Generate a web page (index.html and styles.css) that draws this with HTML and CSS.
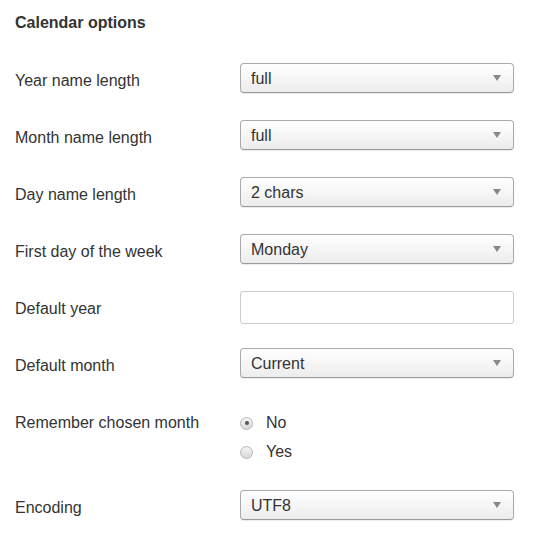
FILE: index.html
```html
<!DOCTYPE html>
<html>
<head>
<meta charset="utf-8">
<link rel="stylesheet" href="styles.css">
</head>
<body>
<div class="form">
  <h3 class="title">Calendar options</h3>
  <div class="row">
    <div class="label">Year name length</div>
    <div class="select"><span class="value">full</span><span class="arrow"></span></div>
  </div>
  <div class="row">
    <div class="label">Month name length</div>
    <div class="select"><span class="value">full</span><span class="arrow"></span></div>
  </div>
  <div class="row">
    <div class="label">Day name length</div>
    <div class="select"><span class="value">2 chars</span><span class="arrow"></span></div>
  </div>
  <div class="row">
    <div class="label">First day of the week</div>
    <div class="select"><span class="value">Monday</span><span class="arrow"></span></div>
  </div>
  <div class="row">
    <div class="label">Default year</div>
    <div class="input"></div>
  </div>
  <div class="row">
    <div class="label">Default month</div>
    <div class="select"><span class="value">Current</span><span class="arrow"></span></div>
  </div>
  <div class="row radio-row">
    <div class="label">Remember chosen month</div>
    <div class="radios">
      <div class="radio-line"><span class="radio checked"></span><span>No</span></div>
      <div class="radio-line"><span class="radio"></span><span>Yes</span></div>
    </div>
  </div>
  <div class="row">
    <div class="label">Encoding</div>
    <div class="select"><span class="value">UTF8</span><span class="arrow"></span></div>
  </div>
</div>
</body>
</html>
```
FILE: styles.css
```css
html, body {
  margin: 0;
  padding: 0;
  background: #fff;
}
body {
  font-family: "Liberation Sans", Arial, sans-serif;
  font-size: 16px;
  color: #333;
}
.form {
  padding: 13px 15px 0 15px;
  width: 499px;
}
.title {
  margin: 0 0 30px 0;
  font-size: 16px;
  line-height: 20px;
  font-weight: bold;
  color: #333;
}
.row {
  display: flex;
  align-items: center;
  height: 30px;
  margin-bottom: 27px;
}
.label {
  width: 225px;
  flex: none;
  padding-top: 5px;
  line-height: 20px;
}
.select {
  width: 274px;
  height: 30px;
  box-sizing: border-box;
  border: 1px solid #aaa;
  border-bottom-color: #999;
  border-radius: 4px;
  background: linear-gradient(to bottom, #ffffff 0%, #f7f7f7 45%, #ececec 100%);
  box-shadow: 0 1px 1px rgba(0,0,0,0.08);
  display: flex;
  align-items: center;
  justify-content: space-between;
  padding: 0 12px 0 10px;
  color: #333;
}
.value {
  line-height: 20px;
  padding-top: 2px;
}
.arrow {
  width: 0;
  height: 0;
  border-left: 4px solid transparent;
  border-right: 4px solid transparent;
  border-top: 6px solid #888;
}
.input {
  width: 274px;
  height: 33px;
  box-sizing: border-box;
  border: 1px solid #ccc;
  border-radius: 3px;
  background: #fff;
  margin: 0 0 -3px 0;
}
.radio-row {
  height: auto;
  align-items: flex-start;
  margin-bottom: 24px;
}
.radio-row .label {
  padding-top: 8px;
  line-height: 20px;
}
.radios {
  display: flex;
  flex-direction: column;
  padding-top: 3px;
}
.radio-line {
  display: flex;
  align-items: center;
  height: 28px;
  padding-top: 1px;
}
.radio {
  width: 13px;
  height: 13px;
  box-sizing: border-box;
  border-radius: 50%;
  border: 1px solid #b5b5b5;
  background: linear-gradient(to bottom, #f5f5f5, #d8d8d8);
  margin-right: 13px;
  display: flex;
  align-items: center;
  justify-content: center;
}
.radio.checked::after {
  content: "";
  width: 4px;
  height: 4px;
  border-radius: 50%;
  background: #555;
}
```
